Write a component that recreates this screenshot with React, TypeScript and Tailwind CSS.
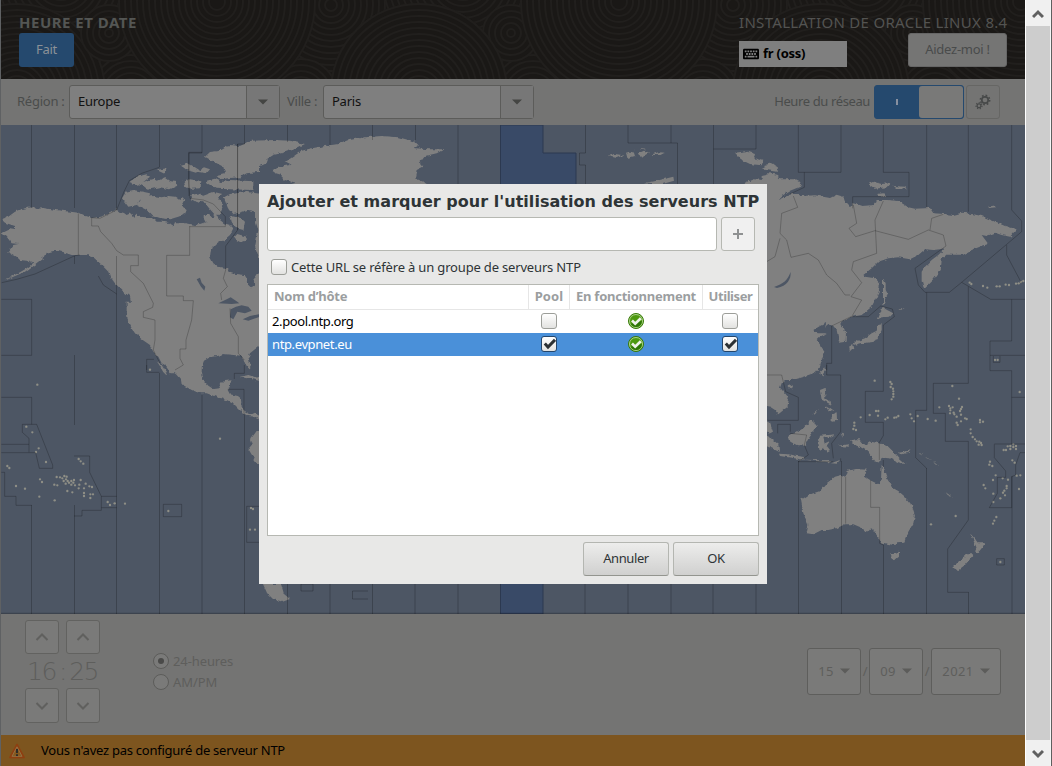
import React from "react";
import { FaKeyboard } from "react-icons/fa";

const dots = (s: string, r = 3.5) =>
  s.split(" ").map((p, i) => {
    const [x, y] = p.split(",").map(Number);
    return <circle key={i} cx={x} cy={y} r={r} />;
  });

function Rings({ cx, cy, r }: { cx: number; cy: number; r: number }) {
  const rings = [];
  for (let i = r; i > 2; i -= 6) rings.push(i);
  return (
    <g>
      {rings.map((v) => (
        <circle key={v} cx={cx} cy={cy} r={v} />
      ))}
    </g>
  );
}

function HeaderPattern() {
  return (
    <svg className="absolute inset-0" width="1024" height="79" fill="#1a1816" stroke="#211f1d" strokeWidth="2">
      {[0, 1, 2].map((k) => (
        <g key={k} transform={`translate(${k * 402} 0)`}>
          <Rings cx={60} cy={-20} r={80} />
          <Rings cx={130} cy={95} r={70} />
          <Rings cx={330} cy={5} r={66} />
          <Rings cx={300} cy={95} r={36} />
          <Rings cx={16} cy={92} r={88} />
          <Rings cx={108} cy={33} r={28} />
          <Rings cx={216} cy={2} r={98} />
        </g>
      ))}
      <Rings cx={418} cy={92} r={88} />
      <Rings cx={820} cy={92} r={88} />
    </svg>
  );
}

function WorldMap() {
  return (
    <svg className="block shrink-0" width="1024" height="489" viewBox="1 125 1024 489">
      <defs>
        <filter id="coast" x="0" y="0" width="1" height="1" colorInterpolationFilters="sRGB">
          <feTurbulence type="fractalNoise" baseFrequency="0.22" numOctaves="2" seed="4" />
          <feDisplacementMap in="SourceGraphic" scale="4" xChannelSelector="R" yChannelSelector="G" />
        </filter>
      </defs>
      <rect x="1" y="125" width="1024" height="489" fill="#4d5664" />
      <path d="M500.500 125H543V153H576V200H543V614H500.500Z" fill="#394a67" stroke="#2c3950" />
      <g fill="#808080" filter="url(#coast)">
        <rect x="1" y="125" width="1024" height="489" fill="none" />
        <g transform="translate(0 120) scale(.33333)">
          <path d="M4 298 25 290 45 275 65 268 85 263 100 262 110 267 130 264 160 269 200 274 235 278 255 288 275 294 300 290 325 282 350 268 358 275 372 279 380 285 392 280 400 290 412 280 415 290 440 292 465 300 470 305 490 305 505 308 520 320 525 310 560 310 585 315 600 312 620 305 640 295 650 285 660 300 672 310 690 315 700 325 690 345 672 360 655 370 640 380 632 395 630 410 640 430 655 440 675 443 690 455 710 462 735 465 740 480 742 492 755 505 767 495 760 480 770 465 790 450V668L762 690 750 700 745 712 752 735 745 745 735 730 730 715 720 707 700 705 670 702 650 708 630 712 612 722 605 740V760H512L495 735 485 730 475 710 460 695 450 675 425 658 405 640 395 625 383 600 380 570V545H393L390 530 365 510 345 490 330 470 325 455 300 430 280 412 260 405H215L200 400 175 393 160 393 140 398 135 410 115 425 95 440 75 455 40 470 15 482 30 472 60 457 80 445 100 430 80 422 60 420 50 410 25 395 40 375 55 372 35 370 20 350 5 340 30 328 45 330V318L15 308Z" />
          <path d="M366 235 378 215 400 210 432 216 450 220 448 232 420 240 410 255 385 260ZM410 255 430 232 460 228 485 232 505 228 525 230 538 240 548 228 556 240 545 260 560 270 555 282 535 290 510 298 480 294 455 286 440 270ZM388 186 410 170 440 163 450 170 430 186 410 194ZM415 192 440 182 460 176 470 182 495 172 512 184 530 186 535 196 510 208 480 202 450 208ZM540 134 562 128 585 142 598 150 588 158 560 150ZM590 155 612 142 630 148 620 160ZM615 110 630 96 660 92 690 75 720 78 745 66 780 62V155L740 160 720 172 690 174 660 178 650 168 675 162 670 140 650 130ZM550 186 570 178 604 184 602 205 575 206 552 200ZM620 182 645 176 665 186 690 180 760 184V210L690 208 650 206 625 192ZM570 226 600 220 612 238 592 250 575 240ZM602 230 640 216 664 222 655 238 670 255 660 280 650 290 625 262ZM672 232 690 222 740 216 790 222V280L745 270 718 278 700 282 684 262ZM690 285 715 290 735 305 730 330 710 325 695 305ZM700 355 712 342 740 350 740 362 720 366ZM470 150 500 145 495 162ZM610 290 628 282 640 300 618 306Z" />
        </g>
        <g transform="translate(0 365) scale(.33333)">
          <path d="M470 -12 485 0 502 28 490 22 478 0ZM505 -5H605L603 25 610 45 625 62 640 72 655 70 665 55 675 45 695 43 690 60 683 75 690 88 710 92 722 95 725 125 735 142 750 150 765 143 775 150 785 165 760 155 745 153 730 145 710 125 700 115 680 105 665 100 655 98 640 92 620 85 600 85 575 75 545 58 543 45 530 30 515 15ZM718 36 745 30 785 42V50L745 40ZM790 190 770 198 750 225 755 240 745 252 765 285 790 320ZM740 0 755 0 748 12Z" />
        </g>
        <g transform="translate(255 120) scale(.33333)">
          <path d="M-10 62 60 60 105 62 150 72 120 86 85 98 55 105 35 118 30 132-10 150ZM52 150 85 138 110 134 90 124 105 116 140 92 170 85 210 78 250 72 280 60 330 52 380 48 430 52 480 65 490 75 475 84 520 88 568 88 545 100 510 108 495 128 505 140 485 150 480 175 515 190 480 205H60L120 188 90 180 75 164 55 158ZM0 225 15 228V420L0 380 10 330 0 300Z" />
        </g>
        <g transform="translate(500 120) scale(.33333)">
          <path d="M325 108 345 102 370 106 350 114ZM378 98 400 92 405 108 382 114ZM410 102 432 92 450 98 430 110ZM452 104 475 97 494 98 480 106ZM420 90 430 84 438 88ZM435 190 470 182 520 170 522 182 480 194ZM705 98 740 94 765 102 762 115 790 122 785 136 750 132 725 120ZM785 148 805 135 833 140V155ZM725 192 760 178 790 180 800 160 835 165V200Z" />
        </g>
        <g transform="translate(765 120) scale(.33333)">
          <path d="M-10 165 15 160 30 165 45 178 90 178 110 188 105 200 75 212 50 228 38 240 80 222 95 222 110 228 150 226 195 234 215 224 235 230 240 245 255 262 265 250 290 258 330 255 335 240 370 240 400 243 430 262 450 266 495 264 505 280 540 282 565 285 590 278 610 280 650 288 690 305 720 318 755 328 735 350 710 345 690 338 665 348 650 345 670 372 650 378 620 390 595 404 565 404 545 404 530 415 528 445 520 460 505 480 490 495 477 508 470 480V455L480 440 500 420 520 405 540 385 525 388 505 390 480 388 460 405 435 418 400 412 370 415 340 425 320 445 295 465 300 470 330 475 345 490 340 520 320 560 290 585 260 590 240 600 225 612 235 625 243 640 242 662 222 665 215 630 205 618 190 612 180 620 185 608 165 618 145 630 155 640 185 640 165 650 155 660 170 680 180 695 170 720 160 755H-10ZM0 135 20 130 40 145 15 150ZM310 192 325 185 350 192 375 190 365 202 330 206ZM385 198 420 200 425 206 395 205ZM336 222 355 220 362 228 345 230ZM666 260 690 256 694 262 670 264ZM354 475 362 490 362 510 370 525 358 530 358 552 354 555ZM347 568 355 564 385 580 375 590 350 592 335 600ZM340 612 350 610 350 630 340 650 330 665 305 668 285 670 265 675 270 665 300 655 320 640 335 632ZM252 680 262 674 265 688 255 695ZM400 570 420 563 405 573Z" />
        </g>
        <g transform="translate(765 365) scale(.33333)">
          <path d="M-10 -5H165L160 12 145 25 115 35 80 45 60 45 50 55 45 68 60 85 72 100 68 125 40 148 30 135 15 125 0 122-10 120ZM166 22 178 10 180 18 170 34ZM68 64 85 58 80 70 70 70ZM165 75 182 68 184 90 180 100 195 110 200 120 185 112 170 104ZM200 148 215 142 216 165 200 168ZM180 120 195 128 208 138 192 140ZM142 150 162 132 150 148ZM0 165 15 175 24 200 15 205-10 190ZM-10 205 12 215 40 238 42 260 20 250-10 238ZM70 210 90 205 115 190 138 165 145 165 146 178 155 180 145 200 128 225 120 242 95 240 76 230ZM42 266 70 268 90 272 118 276 115 284 80 278 45 273ZM120 284 145 285 160 286 200 285 190 292 150 288ZM198 295 225 285 215 296ZM165 212 210 208 200 214 175 220 180 235 195 228 185 242 195 255 185 260 176 248 164 255 160 235ZM255 226 280 222 290 235 305 240 320 230 345 235 370 245 385 260 400 278 422 298 400 292 375 280 350 278 345 290 325 285 310 260 290 248 270 240ZM400 264 420 260 440 252 430 264 410 268ZM228 205 235 200 232 218ZM218 242 250 238 252 245ZM350 298 355 303 362 330 375 350 385 370 400 378 420 395 440 420 450 450 445 475 430 500 418 530 400 532 385 540 360 535 345 530 335 510 325 495 315 490 305 502 290 488 265 478 240 478 215 490 190 495 170 495 145 508 125 505 130 480 115 445 108 405 130 390 165 378 185 355 210 335 230 330 240 335 245 318 270 312 305 314 300 335 320 348 340 358 348 345ZM375 562 385 565 402 560 402 575 390 586 382 580ZM615 505 628 520 640 535 660 535 650 550 638 565 630 560 635 548ZM615 560 625 570 600 600 580 615 562 608 580 590 600 575ZM542 382 565 398 548 390ZM462 262 475 272 465 266ZM480 275 500 286 485 280ZM505 290 520 302 510 298Z" />
        </g>
        <path d="M263 584 270 584 281 584 284 594 290 599 282 602 273 599 267 593Z" />
      </g>
      <g fill="#4d5664">
        <g transform="translate(0 120) scale(.33333)">
          <path d="M590 478 600 473 605 488 616 500 613 512 603 500ZM655 550 680 538 692 532 712 545 718 550 695 552ZM692 568 708 560 725 556 745 560 755 572 735 580 712 575 700 598 690 592ZM728 598 750 588 780 582V590L745 602Z" />
        </g>
        <path d="M774 287C783 284 788 280 790.500 272C791.500 279 787 286 777 288Z" />
      </g>
      <g fill="#8f8f86">
        <g transform="translate(0 365) scale(.33333)">
          {dots("112,59 450,14 79,185 97,202 116,250 108,261 138,291 22,303 28,309 48,363 75,371 118,395 164,406 120,343 126,351 170,336 180,337 187,340 193,333 200,335 198,343 191,348 203,348 207,353 214,348 220,353 222,345 214,359 197,356 225,361 242,345 257,356 238,359 268,364 276,366 163,359 172,361 202,378 217,382 236,370 252,370 252,384 252,393 271,388 279,388 271,399 236,282 242,289 250,296 323,411 330,420 344,415 375,416 505,438 660,221 753,429 759,432 750,494 765,494")}
        </g>
        <g transform="translate(765 365) scale(.33333)">
          {dots("329,47 376,51 380,57 377,66 384,71 385,79 385,87 385,95 380,103 287,157 314,150 333,138 340,138 339,152 361,163 368,158 388,158 394,157 400,153 436,148 440,160 447,169 458,153 488,162 512,167 268,173 268,182 265,192 273,195 523,127 552,123 556,130 563,127 556,136 555,145 566,143 568,148 575,155 591,126 588,132 585,138 588,149 600,160 605,162 588,169 575,173 578,180 562,63 582,101 645,165 645,172 654,170 617,193 617,205 623,216 630,223 635,229 643,230 648,234 641,239 650,240 716,255 723,255 728,244 736,243 736,252 745,238 745,246 753,243 753,252 764,81 675,290 673,299 682,303 742,286 749,293 692,331 684,345 656,360 661,370 685,386 685,411 706,400 713,340 729,344 755,332 766,331 725,363 725,370 718,377 714,383 720,391 762,372 694,456 688,467 684,476 572,453 498,478 706,591 690,-15 698,-15")}
        </g>
        <g transform="translate(765 120) scale(.33333)">
          {dots("614,488 619,492 654,498 667,503 695,499 704,499 722,494 732,495 753,491 761,490 768,486 775,483")}
        </g>
      </g>
      <g fill="none" stroke="#000" strokeOpacity=".22" strokeWidth="1">
        <path d="M74.500 125V208M74.500 256V264M74.500 355V425M74.500 505V614M116.500 125V210M116.500 256V614M159.500 125V167M159.500 373V614M202 125V153H189V196M202 395V614M244.500 125V144H237.500V230M244.500 415V614M287.500 125V142M330 125V145M372.500 125V140M415.500 125V140M458 125V184M585.500 125V153H579.500V165H585.500V184M628 125V143H677.500V184M671 125V143M713.500 125V184M756 125V149H713.500M31.500 125V208M31.500 505V614M287.500 584V614M330 584V614M372.500 584V614M415 584V614M458 584V614M585 584V614M628 584V614M671 584V614M713 584V614M756 584V614M798.500 461V614M841.500 461V614M883.500 545V614M926.500 468V614M968.500 592V614M1012 476V614M301 584H313V591H301ZM368 591H352.500V599H368" />
        <path d="M1 613.500H1025" strokeWidth="1.500" />
        <g transform="translate(0 120) scale(.33333)" strokeWidth="3">
          <path d="M478 142 425 160 388 182 372 215 350 270 300 295 275 293V318H295L302 335 335 370 350 392 370 405H415V437H392V455L430 490 460 550 458 562 430 575V592L465 600V660L460 690 480 730M235 280V405M5 488 50 478 105 462 225 407 240 405M295 468 310 495 350 522M4 538H95V706H4M569 318V406H500V528H550V542H580L575 600 558 660V687H540V715L550 735 525 750M676 290V320H569M606 97H566V190L570 235 610 240 640 252 676 290M713 72V330L677 378V450L670 475 682 500 662 520 665 540M690 565 692 610 715 650V700L733 720M440 750V718H462" />
        </g>
        <g transform="translate(0 365) scale(.33333)" strokeWidth="3">
          <path d="M4 97H95V178M67 178H110L158 300V310H118L107 263H4M67 178V202L87 220V262M4 238H87M4 322H14V394H48V421H95M222 273H269V322L304 394V436H246V453H222M304 394H350M304 428H350M490 418H545V455H490ZM440 0V22H478M703 42V25H733V0M683 73H732V150M780 424H740V532H780" />
        </g>
        <g transform="translate(765 120) scale(.33333)" strokeWidth="3">
          <path d="M100 15V157H228V15M355 15V157H432V230H263V265M485 15V262M610 15V275M740 15V270L770 303V335L590 487 677 538H780M118 157V202L75 222M85 228 98 262 50 280 45 340 65 360 78 412 130 400 160 420 185 465 215 490 240 525H255M45 355 30 410 5 425M265 255 275 310 252 325 272 350 330 332 430 358 490 330 535 345 543 378 450 445 460 495 480 517H553L590 487M355 243 330 300 335 400 265 425 260 450 290 488 258 530 290 540 260 590H310L347 558 382 567 388 590 355 615V735M535 283 500 295 495 330M258 590 200 618V730H185V750M485 517V735M610 500V735M725 375V405L770 490M740 538V663H675V735M675 706H780M685 708V727H705V708" />
        </g>
        <g transform="translate(765 365) scale(.33333)" strokeWidth="3">
          <path d="M5 30H50L62 80 100 97V166H5M38 205V178H76V200M185 0V30H227V200L200 235 205 280M100 290H205M118 240 125 210 75 205M118 240 130 270 100 290M227 280V290M355 0V79H301V172H355V212L343 232V285M355 285V305M485 0V136H452V278L485 310M610 0V55H505V145H541V229H610V465L548 552V682H610M675 0V17H740V237H780M740 97H780M688 238V278L722 318V337H697V385L673 428H740V335L752 330V300L765 263H780M740 237H688M242 335V476M317 345V427H344V535L355 540M695 581H718V600H695Z" />
        </g>
      </g>
    </svg>
  );
}

function Triangle({ color }: { color: string }) {
  return (
    <svg width="10" height="6" viewBox="0 0 10 6">
      <path d="M0 .5H10L5 5.500Z" fill={color} />
    </svg>
  );
}

function Combo({ text }: { text: string }) {
  return (
    <div className="flex h-[34px] w-[211px] rounded-[3px] border border-[#5c5c5a] bg-[#7f7f7f] text-[#111]">
      <span className="flex-1 px-2 leading-[31px]">{text}</span>
      <span className="flex w-[33px] items-center justify-center border-l border-[#5c5c5a] bg-[#777]">
        <Triangle color="#444543" />
      </span>
    </div>
  );
}

function Gears() {
  return (
    <svg width="16" height="16" viewBox="0 0 16 16" fill="none" stroke="#474949">
      <circle cx="10" cy="6" r="3.200" strokeWidth="1.700" />
      <circle cx="10" cy="6" r="4.700" strokeWidth="1.500" strokeDasharray="1.700 1.990" />
      <circle cx="4" cy="11.800" r="1.900" strokeWidth="1.200" />
      <circle cx="4" cy="11.800" r="3" strokeWidth="1.200" strokeDasharray="1.200 1.490" />
    </svg>
  );
}

function Arrow({ down }: { down?: boolean }) {
  return (
    <div className={"flex w-[34px] items-center justify-center rounded-[3px] border border-[#626260] bg-[#7a7a79] " + (down ? "h-[35px]" : "h-[34px]")}>
      <svg width="14" height="10" viewBox="0 0 14 10" fill="none" stroke="#60605e" strokeWidth="2">
        <path d={down ? "M1.500 2 7 7.500 12.500 2" : "M1.500 8 7 2.500 12.500 8"} />
      </svg>
    </div>
  );
}

function Check({ on }: { on?: boolean }) {
  return (
    <span
      className={
        "block h-4 w-4 rounded-[3px] border bg-linear-to-b from-white to-[#e2e2e0] " +
        (on ? "border-[#24466b]" : "border-[#9c9e99]")
      }
    >
      {on && (
        <svg className="block" width="14" height="14" viewBox="0 0 14 14">
          <path d="M2.800 6.500 6 10 13 2.800" fill="none" stroke="#2b3033" strokeWidth="3" />
        </svg>
      )}
    </span>
  );
}

function Good() {
  return (
    <svg width="16" height="16" viewBox="0 0 16 16">
      <circle cx="8" cy="8" r="7.500" fill="#4a9a0c" stroke="#397a0a" />
      <circle cx="8" cy="8" r="6.500" fill="#4c990f" stroke="#b5d69a" strokeWidth=".9" />
      <path d="M2.800 11A6 6 0 0 0 13.200 11L14 8 8 9Z" fill="#2e7606" />
      <path d="M4 7.500 7.200 10.600 12.800 5.200" fill="none" stroke="#eef2ea" strokeWidth="2.700" />
    </svg>
  );
}

function Row({ name, on }: { name: string; on?: boolean }) {
  return (
    <div className={"grid h-[23px] grid-cols-[261px_41px_133px_55px] items-center pb-px " + (on ? "bg-[#4a90d9] text-white" : "text-black")}>
      <span className="pl-1 tracking-[-0.38px]">{name}</span>
      <span className="flex justify-center pr-[2px]"><Check on={on} /></span>
      <span className="flex justify-center pr-[2px]"><Good /></span>
      <span className="flex justify-center pr-[2px]"><Check on={on} /></span>
    </div>
  );
}

function Dialog() {
  return (
    <div className="absolute left-[259px] top-[184px] flex h-[400px] w-[508px] flex-col bg-[#e8e8e7] px-2 text-[#2e3436]">
      <h1 className="h-[33px] whitespace-nowrap font-['DejaVu_Sans'] text-[16px] font-bold leading-[35px] tracking-[0.03px]">
        Ajouter et marquer pour l'utilisation des serveurs NTP
      </h1>
      <div className="flex gap-1">
        <div className="h-[34px] w-[450px] rounded-[3px] border border-[#b6b8b2] bg-white" />
        <div className="flex h-[34px] w-[34px] items-center justify-center rounded-[3px] border border-[#b6b8b2] bg-[#f0f0f0]">
          <svg width="10" height="10" stroke="#8f9192" strokeWidth="2"><path d="M0 5H10M5 0V10" /></svg>
        </div>
      </div>
      <div className="flex h-[33px] items-center gap-1 pb-px pl-1">
        <Check />
        <span className="whitespace-nowrap tracking-[-0.17px]">Cette URL se réfère à un groupe de serveurs NTP</span>
      </div>
      <div className="h-[252px] w-[492px] border border-[#b6b8b2] bg-white">
        <div className="grid h-[25px] grid-cols-[261px_41px_133px_55px] border-b border-[#e6e6e6] text-center font-bold leading-[23px] text-[#9b9e9f]">
          <span className="border-r border-[#e6e6e6] pl-1.5 text-left">Nom d’hôte</span>
          <span className="border-r border-[#e6e6e6] tracking-[0.1px]">Pool</span>
          <span className="whitespace-nowrap border-r border-[#e6e6e6]">En fonctionnement</span>
          <span className="tracking-[-0.4px]">Utiliser</span>
        </div>
        <Row name="2.pool.ntp.org" />
        <Row name="ntp.evpnet.eu" on />
      </div>
      <div className="mt-1.5 flex justify-end gap-1">
        {["Annuler", "OK"].map((t) => (
          <button key={t} className="h-[34px] w-[86px] rounded-[3px] border border-[#b4b6b1] border-b-[#93958f] bg-linear-to-b from-[#ededec] to-[#d0d0cf] pb-0.5 tracking-[-0.4px]">
            {t}
          </button>
        ))}
      </div>
    </div>
  );
}

function DateBox({ text, width }: { text: string; width: string }) {
  return (
    <div className={"flex h-[47px] items-center justify-center gap-1.5 rounded-[3px] border border-[#5e5e5c] bg-[#7a7a79] " + width}>
      <span className="tracking-[0.4px]">{text}</span>
      <Triangle color="#5c5c5a" />
    </div>
  );
}

function Scrollbar() {
  return (
    <div className="flex h-full w-[27px] border-l border-l-white border-r border-r-[#5f5f5f] bg-[#cdcdcd]">
      <div className="flex flex-1 flex-col justify-between border-r border-[#f6f6f6]">
        <div className="flex h-[26px] items-center justify-center bg-[#f0f0f0] pt-0.5">
          <svg width="12" height="10" fill="none" stroke="#606060" strokeWidth="3"><path d="M1 8 6 3 11 8" /></svg>
        </div>
        <div className="flex h-[26px] items-center justify-center bg-[#f0f0f0] pt-0.5">
          <svg width="12" height="10" fill="none" stroke="#606060" strokeWidth="3"><path d="M1 2 6 7 11 2" /></svg>
        </div>
      </div>
    </div>
  );
}

export default function App() {
  return (
    <div className="relative flex h-[766px] w-[1052px] overflow-hidden bg-[#747473] font-['Noto_Sans',sans-serif] text-[13px] leading-none tracking-[-0.25px]">
      <div className="w-px shrink-0 bg-[#5f6163]" />
      <main className="flex w-[1024px] shrink-0 flex-col">
        <header className="relative flex h-[79px] shrink-0 justify-between overflow-hidden bg-[#1a1816] px-[18px]">
          <HeaderPattern />
          <div className="relative pt-[12px]">
            <div className="h-[21px] text-[15px] font-bold leading-5 tracking-[0.5px] text-[#545654]">HEURE ET DATE</div>
            <div className="h-[34px] w-[55px] rounded-[3px] bg-[#25496e] text-center leading-[33px] text-[#8b9197]">Fait</div>
          </div>
          <div className="relative w-[268px] pt-[12px]">
            <div className="h-[21px] whitespace-nowrap text-[15px] leading-5 tracking-[0.31px] text-[#535351]">INSTALLATION DE ORACLE LINUX 8.4</div>
            <div className="flex items-start justify-between">
              <div className="mt-2 flex h-[26px] w-[108px] items-center gap-1 bg-[#7f7f7f] pb-px pl-1 font-bold text-black">
                <FaKeyboard size={16} />
                fr (oss)
              </div>
              <div className="h-[34px] w-[99px] rounded-[3px] border border-[#666] bg-[#757574] text-center leading-[31px] text-[#494b4b]">Aidez-moi !</div>
            </div>
          </div>
        </header>
        <div className="flex h-[46px] shrink-0 items-center bg-[#747473] px-4 text-[#4a4c4b]">
          <span className="w-[52px] whitespace-nowrap pb-0.5">Région :</span>
          <Combo text="Europe" />
          <span className="ml-[7px] w-[36px] whitespace-nowrap pb-0.5">Ville :</span>
          <Combo text="Paris" />
          <span className="ml-auto pb-0.5 tracking-[-0.38px]">Heure du réseau</span>
          <div className="ml-1 mr-[2px] flex h-[34px] w-[90px] rounded-[3px] border border-[#25496e] bg-[#25496e]">
            <span className="flex w-11 items-center justify-center"><i className="block h-1.5 w-0.5 bg-[#8790a0]" /></span>
            <span className="w-11 rounded-[3px] bg-[#797978]" />
          </div>
          <div className="mr-[9px] flex h-[34px] w-[34px] items-center justify-center rounded-[3px] border border-[#666664]">
            <Gears />
          </div>
        </div>
        <WorldMap />
        <section className="flex h-[121px] shrink-0 justify-between pl-6 pr-6 text-[#5e5e5c]">
          <div className="flex">
            <div className="grid w-[75px] grid-cols-2 grid-rows-[34px_34px_35px] justify-between gap-x-[7px] pt-1.5">
              <Arrow />
              <Arrow />
              <div className="col-span-2 flex justify-between whitespace-nowrap pl-[2px] pr-[2px] font-['DejaVu_Sans'] text-[25px] font-light leading-[35px] tracking-[-1.5px]">
                <span>16</span>
                <span>:</span>
                <span>25</span>
              </div>
              <Arrow down />
              <Arrow down />
            </div>
            <div className="ml-[53px] flex flex-col gap-[5px] pt-[39px] tracking-[-0.1px]">
              {["24-heures", "AM/PM"].map((t, i) => (
                <div key={t} className="flex h-4 items-center gap-1">
                  <span className="flex h-4 w-4 items-center justify-center rounded-full border border-[#5c5c5a] bg-[#7a7a79]">
                    {i === 0 && <span className="h-1.5 w-1.5 rounded-full bg-[#4a4a49]" />}
                  </span>
                  {t}
                </div>
              ))}
            </div>
          </div>
          <div className="flex items-center pb-[7px]">
            <DateBox text="15" width="w-[54px]" />
            <span className="w-2 text-center">/</span>
            <DateBox text="09" width="w-[54px]" />
            <span className="w-2 text-center">/</span>
            <DateBox text="2021" width="w-[70px]" />
          </div>
        </section>
        <footer className="flex h-[31px] shrink-0 items-center gap-4 bg-[#7d551f] pl-2 text-black">
          <svg width="16" height="16" viewBox="0 0 16 16">
            <path d="M8 1.500 15 14.500H1Z" fill="#85591f" stroke="#8f3f10" strokeWidth="1.600" strokeLinejoin="round" />
            <path d="M8 3.800 13 13.300H3Z" fill="none" stroke="#9b7a55" strokeWidth=".7" />
            <path d="M8 6V10M8 11.200V13" stroke="#26282a" strokeWidth="1.800" />
          </svg>
          <span>Vous n'avez pas configuré de serveur NTP</span>
        </footer>
      </main>
      <Scrollbar />
      <Dialog />
    </div>
  );
}
